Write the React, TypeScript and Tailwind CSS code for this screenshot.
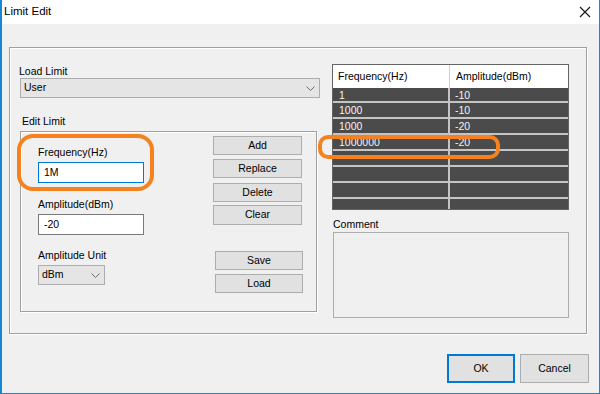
import React from 'react';

const font = { fontFamily: '"Liberation Sans", Arial, sans-serif' };

function Chevron() {
  return (
    <svg width="9" height="5" viewBox="0 0 9 5" className="shrink-0">
      <path d="M0.5 0.5 L4.5 4.5 L8.5 0.5" stroke="#6a6a6a" strokeWidth="1" fill="none" />
    </svg>
  );
}

function WinButton({ label, className = '' }: { label: string; className?: string }) {
  return (
    <div className={`flex items-center justify-center bg-[#e1e1e1] border border-[#adadad] text-[10.5px] text-black ${className}`}>
      {label}
    </div>
  );
}

const rows = [
  ['1', '-10'],
  ['1000', '-10'],
  ['1000', '-20'],
  ['1000000', '-20'],
  ['', ''],
  ['', ''],
  ['', ''],
  ['', ''],
];

export default function App() {
  return (
    <div
      className="relative w-[600px] h-[394px] bg-[#f0f0f0] border-l-2 border-r border-b border-[#1a86d8] flex flex-col overflow-hidden text-black"
      style={font}
    >
      {/* Title bar */}
      <div className="h-[24px] bg-white flex items-center justify-between pl-[2px] pr-[8px] shrink-0">
        <span className="text-[11.5px]">Limit Edit</span>
        <svg width="12" height="12" viewBox="0 0 12 12">
          <path d="M1 1 L11 11 M11 1 L1 11" stroke="#1a1a1a" strokeWidth="1.2" />
        </svg>
      </div>

      {/* Main panel */}
      <div className="ml-[7px] mt-[23px] w-[578px] h-[287px] border border-[#a0a0a0] shadow-[inset_1px_1px_0_#ffffff,1px_1px_0_#ffffff] flex pl-[9px] pt-[16px]">
        {/* Left column */}
        <div className="w-[301px] flex flex-col">
          <div className="h-[14px] text-[10.5px] leading-[14px]">Load Limit</div>
          <div className="ml-[1px] h-[20px] bg-[#e5e5e5] border border-[#adadad] flex items-center justify-between pl-[3px] pr-[4px] text-[10.5px]">
            <span>User</span>
            <Chevron />
          </div>
          <div className="mt-[17px] ml-[3px] h-[13px] text-[10.5px] leading-[13px]">Edit Limit</div>
          <div className="mt-[3px] ml-[1px] w-[297px] h-[181px] border border-[#a0a0a0] shadow-[inset_1px_1px_0_#ffffff,1px_1px_0_#ffffff] flex">
            {/* inputs */}
            <div className="w-[192px] pl-[17px] pt-[13px] flex flex-col">
              <div className="h-[14px] text-[10.5px] leading-[14px]">Frequency(Hz)</div>
              <div className="mt-[3px] w-[106px] h-[21px] bg-white border border-[#0078d7] flex items-center pl-[5px] text-[10.5px]">1M</div>
              <div className="mt-[14px] h-[14px] text-[10.5px] leading-[14px]">Amplitude(dBm)</div>
              <div className="mt-[3px] w-[106px] h-[21px] bg-white border border-[#7a7a7a] flex items-center pl-[5px] text-[10.5px]">-20</div>
              <div className="mt-[13px] h-[14px] text-[10.5px] leading-[14px]">Amplitude Unit</div>
              <div className="mt-[3px] w-[67px] h-[20px] bg-[#e5e5e5] border border-[#adadad] flex items-center justify-between pl-[3px] pr-[4px] text-[10.5px]">
                <span>dBm</span>
                <Chevron />
              </div>
            </div>
            {/* buttons */}
            <div className="flex flex-col pt-[4px]">
              <WinButton label="Add" className="w-[89px] h-[19px]" />
              <WinButton label="Replace" className="mt-[4px] w-[89px] h-[19px]" />
              <WinButton label="Delete" className="mt-[5px] w-[89px] h-[19px]" />
              <WinButton label="Clear" className="mt-[3px] w-[89px] h-[20px]" />
              <WinButton label="Save" className="mt-[26px] ml-[2px] w-[88px] h-[19px]" />
              <WinButton label="Load" className="mt-[4px] ml-[2px] w-[88px] h-[19px]" />
            </div>
          </div>
        </div>

        {/* Right column */}
        <div className="ml-[12px] w-[237px] flex flex-col">
          <div className="h-[146px] border border-[#646464] bg-[#4b4b4b] overflow-hidden flex flex-col">
            <div className="h-[23px] bg-white flex shrink-0 text-[10.5px] items-center">
              <div className="w-[117px] pl-[5px] border-r border-[#d0d0d0] h-full flex items-center">Frequency(Hz)</div>
              <div className="pl-[6px]">Amplitude(dBm)</div>
            </div>
            {rows.map((r, i) => (
              <div
                key={i}
                className={`${i === 0 ? 'h-[15px]' : 'h-[16px]'} flex shrink-0 border-b-2 border-[#c4c4c4] text-[10.5px] text-[#f4f4f4] leading-[14px]`}
              >
                <div className="w-[117px] pl-[6px] border-r-2 border-[#c4c4c4]">{r[0]}</div>
                <div className="pl-[5px]">{r[1]}</div>
              </div>
            ))}
          </div>
          <div className="mt-[8px] h-[13px] text-[10.5px] leading-[13px] pl-[1px]">Comment</div>
          <div className="mt-[1px] ml-[1px] w-[236px] h-[86px] bg-[#f0f0f0] border border-[#adadad]" />
        </div>
      </div>

      {/* Bottom buttons */}
      <div className="flex justify-end gap-[5px] pr-[10px] mt-[20px]">
        <WinButton label="OK" className="w-[68px] h-[29px] !border-[#0078d7] border-2" />
        <WinButton label="Cancel" className="w-[69px] h-[29px]" />
      </div>

      {/* Orange annotation marks */}
      <div className="absolute left-[15px] top-[134px] w-[137px] h-[57px] border-[4px] border-[#f5821f] rounded-[16px]" />
      <div className="absolute left-[316px] top-[135px] w-[182px] h-[24px] border-[4px] border-[#f5821f] rounded-[10px]" />
    </div>
  );
}
